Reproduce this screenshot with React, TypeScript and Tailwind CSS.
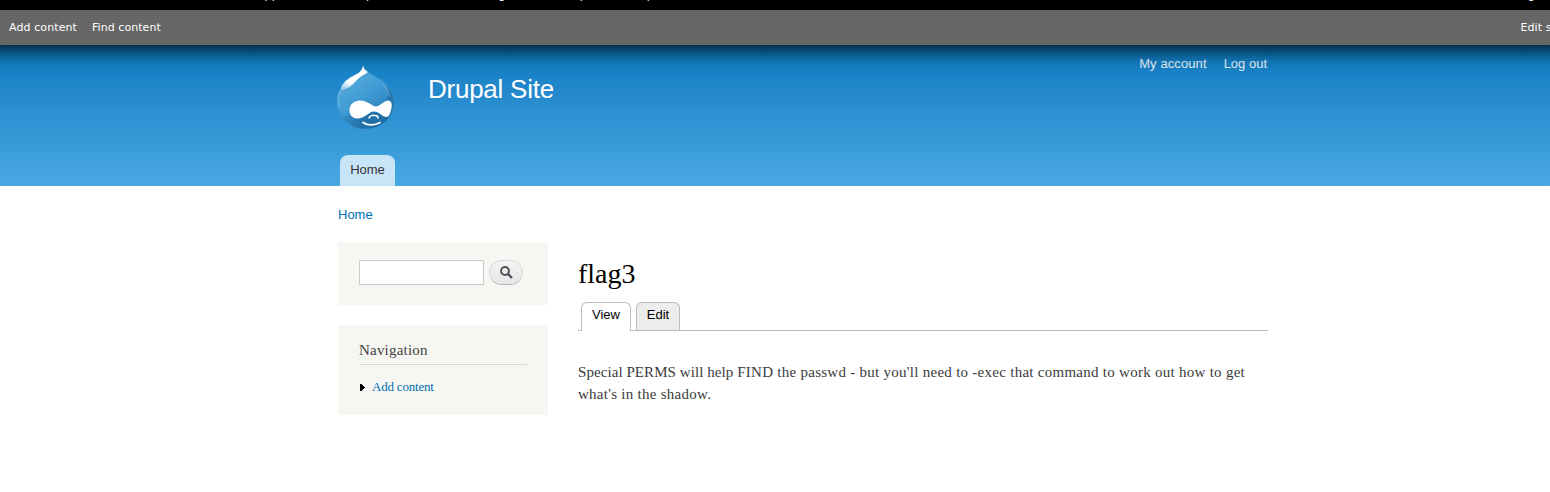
import React from "react";

const adminLinks = [
  { label: "Appearance", left: "ml-[257px]" },
  { label: "People", left: "ml-[22px]" },
  { label: "Modules", left: "ml-[20px]" },
  { label: "Configuration", left: "ml-[20px]" },
  { label: "Reports", left: "ml-[20px]" },
  { label: "Help", left: "ml-[20px]" },
];

function Toolbar() {
  return (
    <div className="relative z-10 h-[45px] w-full text-[11px] tracking-[0.1px] text-white shadow-[0_-17px_20px_20px_#000] [font-family:'DejaVu_Sans',sans-serif]">
      <div className="flex h-[10px] items-end overflow-hidden bg-black">
        <div className="-mb-px flex h-[22px] w-full items-start whitespace-nowrap leading-[13px]">
          {adminLinks.map((l) => (
            <a key={l.label} className={l.left}>{l.label}</a>
          ))}
          <a className="mr-[-7px] ml-auto">Log out</a>
        </div>
      </div>
      <div className="flex h-[35px] items-center overflow-hidden bg-[#666] pt-px pl-[9px] whitespace-nowrap">
        <a>Add content</a>
        <a className="ml-[15px] tracking-[0.05px]">Find content</a>
        <a className="mr-[-48px] ml-auto">Edit shortcuts</a>
      </div>
    </div>
  );
}

function Logo() {
  return (
    <svg className="mt-[20px] h-[65px] w-[58px] shrink-0" viewBox="0 0 58 65">
      <defs>
        <linearGradient id="drop" x1="0.2" y1="0.1" x2="0.8" y2="1">
          <stop offset="0" stopColor="#5aacdc" />
          <stop offset="0.45" stopColor="#3f9bd4" />
          <stop offset="1" stopColor="#2273ab" />
        </linearGradient>
        <linearGradient id="shade" x1="0" y1="0.3" x2="1" y2="0.7">
          <stop offset="0" stopColor="#14598e" stopOpacity="0.05" />
          <stop offset="0.6" stopColor="#14598e" stopOpacity="0.45" />
          <stop offset="1" stopColor="#14598e" stopOpacity="0.35" />
        </linearGradient>
        <linearGradient id="shine" x1="0.8" y1="0" x2="0.2" y2="1">
          <stop offset="0" stopColor="#fff" />
          <stop offset="0.7" stopColor="#fff" />
          <stop offset="1" stopColor="#fff" stopOpacity="0.4" />
        </linearGradient>
      </defs>
      <path d="M26 0C28 7 34 9 41 13C51 18 57 27 57 37C57 53 44 64 28.500 64C12 64 0 52 0 36C0 26 6 18 14 13C20 10 25 7 26 0Z" fill="url(#drop)" />
      <path d="M49 20C54 29 50 38 40 43C29 50 13 51 4 51C10 59 18 63.500 28.500 63.500C44 63.500 56.500 52 56.500 37C56.500 30 53 24 49 20Z" fill="url(#shade)" />
      <path d="M2 42C-1 27 7 18 16 13M52 31C52 27 49 22 45 18" fill="none" stroke="#83c5eb" strokeWidth="1" opacity="0.5" />
      <path d="M26 1C27 4 29 6 31 7C27 10 24 11 21 14C16 19 12 24 5 25C2 23 6 17 14 12C20 9 25 7 26 1Z" fill="url(#shine)" />
      <path d="M23 35.500C31 35.500 35 41.500 39 41.500C43 41.500 47 35.500 51 35.500C54 35.500 55.500 39 54.500 43C53.500 48 52 52.500 49 52C45 51.500 42 46.500 37 46.500C32 46.500 28 53.500 20 53.500C15 53.500 12 49 12.500 44C13 39 18 35.500 23 35.500Z" fill="#fff" />
      <path d="M32 53C33 50.500 36 50 38 50.500C40 50.500 41 51.500 41 53" fill="none" stroke="#fff" strokeWidth="1.500" strokeLinecap="round" />
      <path d="M26 57.500C31 61 38 60.500 43 57.500" fill="none" stroke="#fff" strokeWidth="1.800" strokeLinecap="round" />
    </svg>
  );
}

function Header() {
  return (
    <header className="h-[141px] bg-gradient-to-b from-[#0779bf] to-[#48a9e4] [font-family:'Liberation_Sans',sans-serif]">
      <div className="ml-[337px] flex h-[110px] w-[930px] items-start">
        <Logo />
        <h1 className="mt-[29px] ml-[33px] text-[26px] leading-[30px] tracking-[-0.25px] text-[#fffeff]">Drupal Site</h1>
        <nav className="mt-[9px] ml-auto flex gap-[17px] text-[13px] leading-[20px] text-[#e6f2fa]">
          <a className="tracking-[0.1px]">My account</a>
          <a>Log out</a>
        </nav>
      </div>
      <a className="ml-[340px] flex h-[31px] w-[55px] justify-center rounded-t-[8px] bg-[#c8e5f7] pt-[5px] text-[13px] leading-[20px] text-[#333]">Home</a>
    </header>
  );
}

function Sidebar() {
  return (
    <aside className="w-[210px] shrink-0">
      <div className="flex h-[63px] items-start bg-[#f6f6f2] pt-[18px] pl-[21px]">
        <input aria-label="Search" className="h-[25px] w-[125px] border border-[#ccc] bg-white" />
        <button aria-label="Submit search" className="ml-[5px] flex h-[25px] w-[34px] items-center justify-center rounded-full border border-[#d8d8d8] border-b-[#b4b4b4] bg-gradient-to-b from-[#f3f3f3] to-[#e7e7e7]">
          <svg className="h-[13px] w-[13px]" viewBox="0 0 13 13" fill="none" stroke="#50505a" strokeWidth="2">
            <circle cx="5" cy="5" r="3.900" />
            <path d="M7.900 7.900L12 12" strokeWidth="2.300" />
          </svg>
        </button>
      </div>
      <div className="mt-[20px] h-[90px] bg-[#f6f6f2] px-[21px] pt-[15px]">
        <h2 className="h-[25px] border-b border-[#d6d6d6] text-[15px] leading-[20px] tracking-[0.2px] text-[#444]">Navigation</h2>
        <a className="mt-[12px] flex items-center text-[13px] leading-[20px] tracking-[-0.2px] text-[#0071b3]">
          <svg className="mr-[7px] ml-px h-[7px] w-[5px]" viewBox="0 0 5 7" shapeRendering="crispEdges">
            <path d="M0 0H1L4.500 3.500L1 7H0Z" fill="#000" />
          </svg>
          Add content
        </a>
      </div>
    </aside>
  );
}

function Article() {
  return (
    <main className="ml-[30px] w-[690px]">
      <h1 className="mt-[15px] text-[28px] leading-[34px] text-black">flag3</h1>
      <div className="mt-[11px] flex h-[29px] items-start gap-[5px] border-b border-[#bbb] pl-[3px] text-[13px] leading-[20px] text-black [font-family:'Liberation_Sans',sans-serif]">
        <a className="flex h-[29px] w-[50px] justify-center rounded-t-[6px] border border-b-0 border-[#bbb] bg-white pt-[2px]">View</a>
        <a className="flex h-[28px] w-[44px] justify-center rounded-t-[6px] border border-b-0 border-[#bbb] bg-[#ededed] pt-[2px]">Edit</a>
      </div>
      <p className="mt-[30px] whitespace-nowrap text-[15px] leading-[22px] tracking-[0.27px] text-[#3b3b3b]">
        <span className="tracking-[0.07px]">Special PERMS will help </span>
        FIND the passwd - but you'll need to -exec that command to work out how to get
        <br />
        what's in the shadow.
      </p>
    </main>
  );
}

export default function App() {
  return (
    <div className="h-[492px] w-full overflow-hidden bg-white [font-family:'Liberation_Serif',serif]">
      <Toolbar />
      <Header />
      <div className="ml-[338px]">
        <div className="h-[56px] pt-[19px] text-[13px] leading-[20px] text-[#0071b3] [font-family:'Liberation_Sans',sans-serif]">Home</div>
        <div className="flex items-start">
          <Sidebar />
          <Article />
        </div>
      </div>
    </div>
  );
}
